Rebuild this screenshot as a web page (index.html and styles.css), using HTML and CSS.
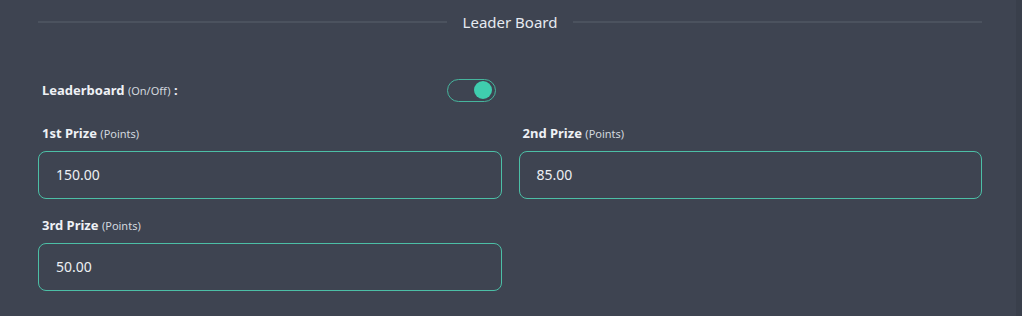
FILE: index.html
```html
<!DOCTYPE html>
<html lang="en">
<head>
<meta charset="utf-8">
<title>Leader Board</title>
<link rel="stylesheet" href="styles.css">
</head>
<body>
<div class="panel">
  <div class="section-title">
    <span class="line"></span>
    <span class="title-text">Leader Board</span>
    <span class="line"></span>
  </div>

  <div class="toggle-row">
    <div class="field-label"><b>Leaderboard</b> <span class="sub">(On/Off)</span> <b>:</b></div>
    <div class="toggle on" role="switch" aria-checked="true"><span class="knob"></span></div>
  </div>

  <div class="grid">
    <div class="field">
      <div class="field-label"><b>1st Prize</b> <span class="sub">(Points)</span></div>
      <div class="input">150.00</div>
    </div>
    <div class="field">
      <div class="field-label"><b>2nd Prize</b> <span class="sub">(Points)</span></div>
      <div class="input">85.00</div>
    </div>
    <div class="field">
      <div class="field-label"><b>3rd Prize</b> <span class="sub">(Points)</span></div>
      <div class="input">50.00</div>
    </div>
  </div>
</div>
</body>
</html>
```

FILE: styles.css
```css
html, body {
  margin: 0;
  padding: 0;
  height: 100%;
}
body {
  background: #393f4b;
  font-family: "Noto Sans", "Open Sans", "Liberation Sans", sans-serif;
  color: #e9edf2;
  overflow: hidden;
}
.panel {
  padding: 10px 38px 0 38px;
  margin-right: 6px;
  min-height: 316px;
  box-sizing: border-box;
  background: #3e4451;
}
.section-title {
  display: flex;
  align-items: center;
  gap: 16px;
  height: 24px;
  margin-right: -4px;
}
.line {
  flex: 1;
  height: 2px;
  background: #4b525e;
}
.title-text {
  font-size: 15px;
  line-height: 24px;
  color: #e6eaf0;
}
.toggle-row {
  display: grid;
  grid-template-columns: 409px auto;
  align-items: center;
  margin-top: 44px;
  height: 24px;
}
.field-label {
  padding-left: 4px;
  font-size: 13px;
  line-height: 18px;
  color: #eef1f5;
}
.field-label b {
  font-weight: 700;
}
.sub {
  font-size: 11px;
  color: #d3d8df;
}
.toggle {
  width: 41px;
  height: 21px;
  border: 1.5px solid #46b59d;
  border-radius: 12px;
  display: flex;
  align-items: center;
  justify-content: flex-end;
  padding: 0 3px;
  box-sizing: content-box;
}
.knob {
  width: 18px;
  height: 18px;
  border-radius: 50%;
  background: #3fcdae;
}
.grid {
  display: grid;
  grid-template-columns: 1fr 1fr;
  column-gap: 17px;
  row-gap: 17px;
  margin-top: 22px;
  margin-right: -4px;
}
.field .field-label {
  margin-bottom: 8px;
}
.input {
  height: 46px;
  border: 1px solid #4cbfa6;
  border-radius: 8px;
  padding-left: 17px;
  font-size: 14px;
  line-height: 46px;
  color: #eceff3;
}
```
